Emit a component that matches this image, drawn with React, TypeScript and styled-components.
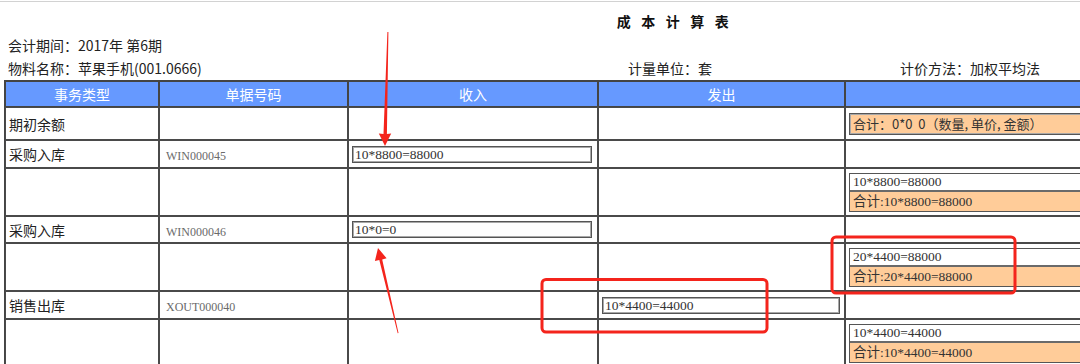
import styled, { createGlobalStyle } from 'styled-components';

const GlobalStyle = createGlobalStyle`
  html, body {
    margin: 0;
    padding: 0;
    overflow: hidden;
    background: #fff;
  }
  body {
    font-family: "Noto Sans CJK SC", "Noto Sans", sans-serif;
    color: #222;
  }
`;

const Screen = styled.div`
  position: relative;
  width: 1080px;
  height: 364px;
  padding-top: 1px;
  box-sizing: border-box;
`;

const Page = styled.div`
  width: 1346px;
  border-top: 1px solid #d2d2d2;
`;

const Title = styled.div`
  padding-top: 9px;
  padding-left: 10px;
  line-height: 20px;
  text-align: center;
  font-size: 14px;
  font-weight: bold;
  letter-spacing: 10.5px;
  color: #111;
`;

const InfoBlock = styled.div`
  margin-top: 3px;
  padding-left: 8px;
  font-size: 14px;
  line-height: 23px;
  color: #222;
`;

const InfoLine = styled.div`
  display: grid;
  grid-template-columns: 620px 272px 1fr;
  white-space: pre;
`;

const Table = styled.table`
  margin-left: 4px;
  width: 1342px;
  table-layout: fixed;
  border-collapse: separate;
  border-spacing: 0;
  border: 1px solid #444;
  font-size: 14px;
`;

const Col = styled.col<{ $w: number }>`
  width: ${({ $w }) => $w}px;
`;

const Row = styled.tr<{ $h: number }>`
  height: ${({ $h }) => $h}px;
`;

const Th = styled.th`
  box-sizing: border-box;
  background: #6699ff;
  color: #fff;
  font-weight: normal;
  text-align: center;
  border: 1px solid #444;
  padding: 0;
`;

const Td = styled.td`
  box-sizing: border-box;
  border: 1px solid #4a4a4a;
  padding: 0 3px;
  vertical-align: middle;
  white-space: nowrap;
  overflow: hidden;
`;

const DocNo = styled.span`
  padding-left: 3px;
  font-family: "Liberation Serif", serif;
  font-size: 12px;
  color: #6a6a6a;
`;

const Field = styled.div<{ $w: number }>`
  box-sizing: border-box;
  width: ${({ $w }) => $w}px;
  height: 17px;
  border: 1px solid #555;
  box-shadow: inset 0 0 0 1px #a8a8a8;
  padding: 0 2px;
  font-family: "Liberation Serif", "Noto Sans CJK SC", serif;
  font-size: 13.5px;
  line-height: 15px;
  color: #333;
`;

const Stack = styled.div`
  box-sizing: border-box;
  width: 480px;
  border: 1px solid #555;
  box-shadow: inset 0 0 0 1px #a8a8a8;
  margin-top: 1px;
`;

const StackLine = styled.div<{ $total?: boolean }>`
  height: ${({ $total }) => ($total ? 19 : 16)}px;
  padding: 0 3px;
  background: ${({ $total }) => ($total ? '#ffcc99' : '#fff')};
  border-top: ${({ $total }) => ($total ? '2px solid #6a6a6a' : 'none')};
  font-family: "Liberation Serif", "Noto Sans CJK SC", serif;
  font-size: 13.5px;
  line-height: ${({ $total }) => ($total ? 19 : 16)}px;
  color: #333;
`;

const Opening = styled.div`
  box-sizing: border-box;
  width: 480px;
  height: 22px;
  border: 1px solid #555;
  box-shadow: inset 0 0 0 1px #a8a8a8;
  background: #ffcc99;
  padding: 0 3px;
  font-size: 13px;
  line-height: 20px;
  color: #333;
  white-space: pre;
`;

const Overlay = styled.svg`
  position: absolute;
  left: 0;
  top: 0;
  pointer-events: none;
`;

type Entry = {
  type?: string;
  doc?: string;
  income?: string;
  out?: string;
  balance?: [string, string];
  h: number;
};

const rows: Entry[] = [
  { type: '采购入库', doc: 'WIN000045', income: '10*8800=88000', h: 28 },
  { balance: ['10*8800=88000', '合计:10*8800=88000'], h: 48 },
  { type: '采购入库', doc: 'WIN000046', income: '10*0=0', h: 27 },
  { balance: ['20*4400=88000', '合计:20*4400=88000'], h: 48 },
  { type: '销售出库', doc: 'XOUT000040', out: '10*4400=44000', h: 28 },
  { balance: ['10*4400=44000', '合计:10*4400=44000'], h: 48 },
];

function Annotations() {
  const red = '#f4241c';
  return (
    <Overlay width={1080} height={364} viewBox='0 0 1080 364'>
      <polygon
        fill={red}
        points='387.4,32 388.4,32 386.9,134 391.2,133.5 385,146 378.8,133.5 383.5,134'
      />
      <polygon
        fill={red}
        points='378,248 386.6,258.3 382.2,259.4 398.5,333 397.7,333.2 379.3,260 374.9,261.1'
      />
      <rect x={542} y={279.5} width={225} height={52.5} rx={4} fill='none' stroke={red} strokeWidth={3} />
      <rect x={832} y={237} width={183} height={56} rx={4} fill='none' stroke={red} strokeWidth={3} />
    </Overlay>
  );
}

export default function App() {
  return (
    <>
      <GlobalStyle />
      <Screen>
        <Page>
          <Title>成本计算表</Title>
          <InfoBlock>
            <div>会计期间：2017年 第6期</div>
            <InfoLine>
              <span>物料名称：苹果手机(001.0666)</span>
              <span>计量单位：套</span>
              <span>计价方法：加权平均法</span>
            </InfoLine>
          </InfoBlock>
          <Table>
            <colgroup>
              <Col $w={154} />
              <Col $w={189} />
              <Col $w={250} />
              <Col $w={247} />
              <Col $w={500} />
            </colgroup>
            <thead>
              <Row $h={26}>
                <Th>事务类型</Th>
                <Th>单据号码</Th>
                <Th>收入</Th>
                <Th>发出</Th>
                <Th></Th>
              </Row>
            </thead>
            <tbody>
              <Row $h={33}>
                <Td>期初余额</Td>
                <Td></Td>
                <Td></Td>
                <Td></Td>
                <Td>
                  <Opening>合计：0*0  0（数量, 单价, 金额）</Opening>
                </Td>
              </Row>
              {rows.map((r, i) => (
                <Row $h={r.h} key={i}>
                  <Td>{r.type}</Td>
                  <Td>{r.doc && <DocNo>{r.doc}</DocNo>}</Td>
                  <Td>{r.income && <Field $w={240}>{r.income}</Field>}</Td>
                  <Td>{r.out && <Field $w={238}>{r.out}</Field>}</Td>
                  <Td>
                    {r.balance && (
                      <Stack>
                        <StackLine>{r.balance[0]}</StackLine>
                        <StackLine $total>{r.balance[1]}</StackLine>
                      </Stack>
                    )}
                  </Td>
                </Row>
              ))}
            </tbody>
          </Table>
        </Page>
        <Annotations />
      </Screen>
    </>
  );
}
